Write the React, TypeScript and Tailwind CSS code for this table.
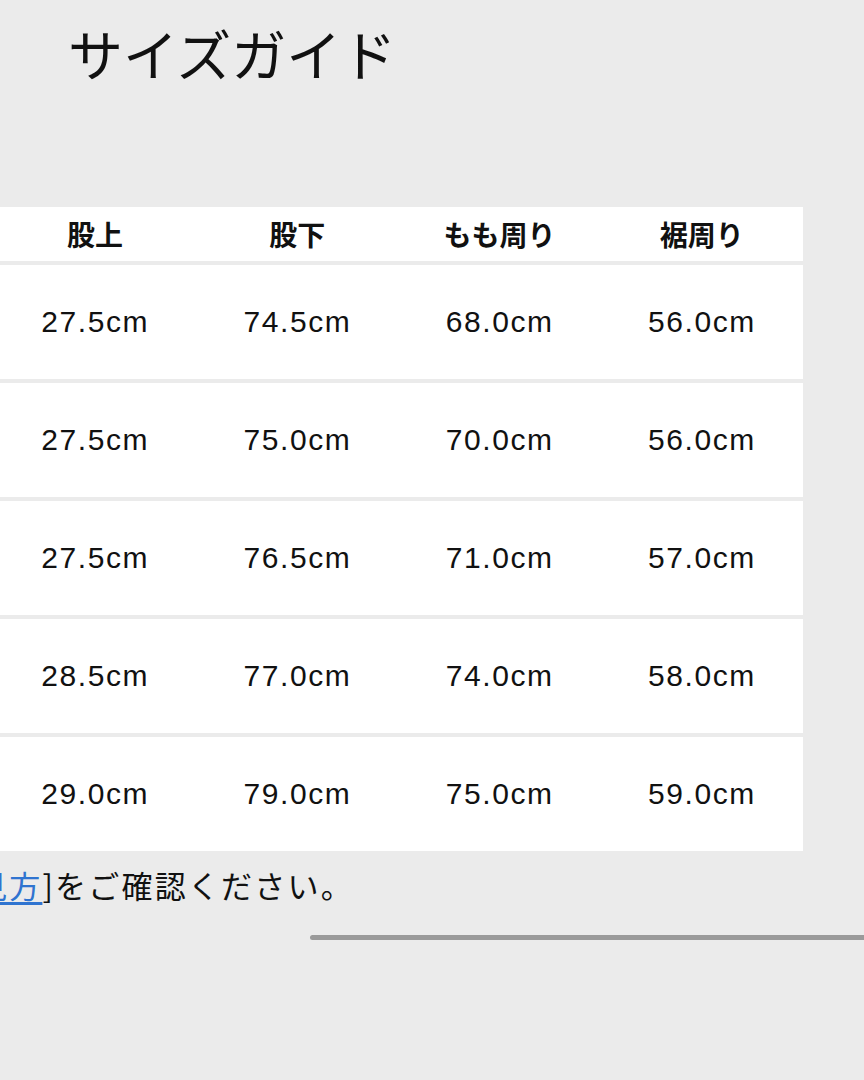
const headers = ["股上", "股下", "もも周り", "裾周り"];

const rows = [
  ["27.5cm", "74.5cm", "68.0cm", "56.0cm"],
  ["27.5cm", "75.0cm", "70.0cm", "56.0cm"],
  ["27.5cm", "76.5cm", "71.0cm", "57.0cm"],
  ["28.5cm", "77.0cm", "74.0cm", "58.0cm"],
  ["29.0cm", "79.0cm", "75.0cm", "59.0cm"],
];

export default function App() {
  return (
    <div
      className="h-[1080px] w-[864px] overflow-hidden bg-[#ebebeb] text-[#111]"
      style={{ fontFamily: '"Liberation Sans", "Noto Sans CJK JP", sans-serif' }}
    >
      <h1
        className="pl-[68px] pt-[25px] text-[55px] leading-[55px] font-normal"
        style={{ fontFamily: '"Noto Sans CJK JP", sans-serif' }}
      >
        サイズガイド
      </h1>

      {/* table is scrolled sideways, first column hidden */}
      <div className="mt-[127px] -ml-[6px] flex w-[809px] flex-col gap-[4px]">
        <div className="grid h-[54px] grid-cols-4 items-center bg-white">
          {headers.map((h) => (
            <div
              key={h}
              className="text-center text-[28px] font-bold leading-none"
              style={{ fontFamily: '"Noto Sans CJK JP", sans-serif' }}
            >
              {h}
            </div>
          ))}
        </div>
        {rows.map((r, i) => (
          <div key={i} className="grid h-[114px] grid-cols-4 items-center bg-white">
            {r.map((v, j) => (
              <div key={j} className="text-center text-[30px] leading-none tracking-[1.6px]">
                {v}
              </div>
            ))}
          </div>
        ))}
      </div>

      <p
        className="mt-[18px] -ml-[24px] whitespace-nowrap text-[31px] leading-[32px] tracking-[2.2px]"
        style={{ fontFamily: '"Noto Sans CJK JP", sans-serif' }}
      >
        <a className="text-[#2f74d0] underline underline-offset-4">見方</a>
        ]をご確認ください。
      </p>

      <div className="mt-[34px] ml-[310px] h-[5px] w-[560px] rounded-full bg-[#9a9a9a]" />
    </div>
  );
}
